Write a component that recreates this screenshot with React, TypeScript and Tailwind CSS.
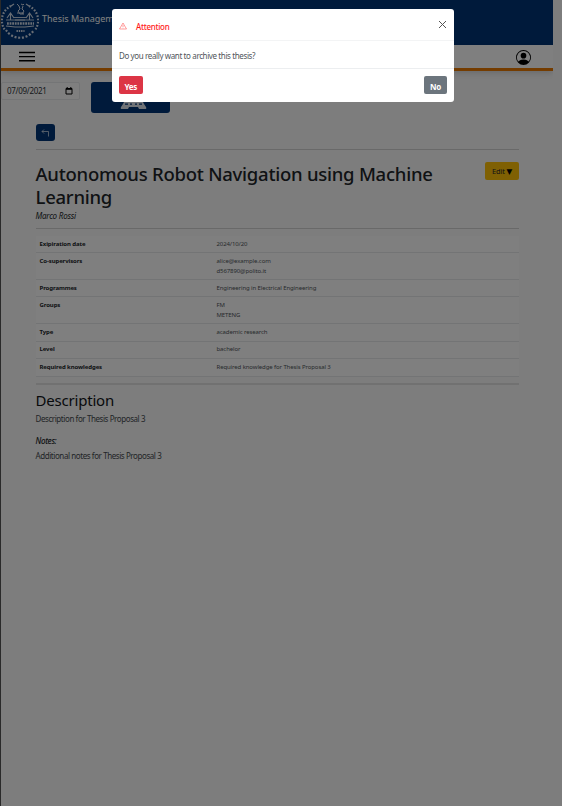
import React from "react";

const rows: { label: string; values: string[]; h: string }[] = [
  { label: "Exipiration date", values: ["2024/10/20"], h: "h-[17px] pt-[3px]" },
  { label: "Co-supervisors", values: ["alice@example.com", "d567890@polito.it"], h: "h-[27px] pt-[3px]" },
  { label: "Programmes", values: ["Engineering in Electrical Engineering"], h: "h-[17px] pt-[3px]" },
  { label: "Groups", values: ["FM", "METENG"], h: "h-[27px] pt-[3px]" },
  { label: "Type", values: ["academic research"], h: "h-[18px] pt-[3px]" },
  { label: "Level", values: ["bachelor"], h: "h-[17px] pt-[2px]" },
  { label: "Required knowledges", values: ["Required knowledge for Thesis Proposal 3"], h: "h-[18px] pt-[3px]" },
];

function Crest() {
  return (
    <svg width="38" height="40" viewBox="0 0 38 40" fill="none" stroke="#d3dbe8" className="shrink-0">
      <path d="M10 6A16 16 0 0 0 4 30M28 6A16 16 0 0 1 34 30" strokeWidth="2.2" strokeDasharray="1.6 1.6" />
      <path d="M13 4l-3 2M25 4l3 2" strokeWidth="1.2" />
      <path d="M5 30A16.500 16.500 0 0 0 33 30" strokeWidth="2.2" strokeDasharray="2 1.7" />
      <path d="M16 4l2 2 1 3-2 2 2 3h4M20 4l2 1 1-1M22 6l-1 3 2 2-2 3M16 13h7" strokeWidth="1" />
      <path d="M6 18l3.500-5 3.500 5M25 18l3.500-5 3.500 5M9.500 13v7M28.500 13v7" strokeWidth="1.1" />
      <path d="M13 17.500h12M14 20h10M5 20h28" strokeWidth="0.9" />
      <path d="M6 23.500h27" strokeWidth="2.4" strokeDasharray="1.8 0.8" />
      <path d="M5 26l9 1h10l9-1" strokeWidth="1.2" />
      <path d="M15.500 31h8" strokeWidth="2.2" strokeDasharray="1.4 0.9" />
    </svg>
  );
}

export default function App() {
  return (
    <div className="relative h-[806px] w-[562px] overflow-hidden bg-[#fafafa] font-['Noto_Sans','Open_Sans',sans-serif] text-[#212529]">
      <div className="flex h-full">
        <div className="w-px shrink-0 bg-[#555]" />
        <div className="w-[552px] shrink-0">
          <header className="flex h-[45px] items-start bg-[#003576] text-white">
            <Crest />
            <span className="ml-[3px] mt-[12px] whitespace-nowrap text-[9px] leading-[14px]">Thesis Management</span>
          </header>
          <nav className="flex h-[25.5px] items-start justify-between border-b-[3px] border-[#e87800] bg-white pl-[18px] pr-[22px] shadow-[0_2px_6px_rgba(0,0,0,0.15)]">
            <svg width="16" height="11" viewBox="0 0 16 11" className="mt-[6px]" stroke="#000" strokeWidth="1.4">
              <path d="M0 1.500h16M0 5.600h16M0 9.700h16" />
            </svg>
            <svg width="15" height="15" viewBox="0 0 16 16" className="mt-[5px]" fill="#000">
              <path d="M11 6a3 3 0 1 1-6 0 3 3 0 0 1 6 0" />
              <path fillRule="evenodd" d="M0 8a8 8 0 1 1 16 0A8 8 0 0 1 0 8m8-7a7 7 0 0 0-5.468 11.37C3.242 11.226 4.805 10 8 10s4.757 1.225 5.468 2.37A7 7 0 0 0 8 1" />
            </svg>
          </nav>
          <div className="flex h-[42.5px] items-start pt-[11.5px]">
            <div className="flex h-[18px] w-[79px] items-center justify-between rounded-[2px] border border-[#e8eaec] bg-white pl-[5px] pr-[6px] text-[8px] tracking-[-0.3px] text-[#30353a]">
              <span>07/09/2021</span>
              <svg width="8" height="8" viewBox="0 0 8 8" fill="none" stroke="#000">
                <path d="M1 1.500h6v5.500H1zM1 2.300h6M2.200 0v1.500M5.800 0v1.500" />
              </svg>
            </div>
            <div className="ml-[11px] flex h-[31px] w-[79px] items-end justify-center rounded-[3px] bg-[#003576] pb-[3px]">
              <svg width="27" height="20" viewBox="0 0 27 20" fill="#e0e6ef" className="ml-[5px]">
                <path d="M4 0h19v12l1 2 2 3q1 2-1 2h-6l-1-2h-9l-1 2H2q-2 0-1-2l2-3 1-2z" />
                <path d="M5 13.500h3v1.200H5zM10 13.500h2v1.200h-2zM15 13.500h2v1.200h-2zM19 13.500h3v1.200h-3z" fill="#003576" />
              </svg>
            </div>
          </div>
          <main className="ml-[34.5px] w-[483.5px] pt-[11px]">
            <div className="flex h-[17px] w-[19.5px] items-center justify-center rounded-[3px] bg-[#003576]">
              <svg width="9" height="9" viewBox="0 0 9 9" fill="none" stroke="#e6ebf3" strokeWidth="0.7">
                <path d="M3 1.500L1 3.500l2 2M1 3.500h6.500v5" />
              </svg>
            </div>
            <div className="mt-[8px] h-px bg-[#d2d2d2]" />
            <div className="flex h-[59px] items-start justify-between pt-[12px]">
              <h1 className="whitespace-nowrap text-[18.5px] font-medium leading-[23px] tracking-[-0.25px]">
                Autonomous Robot Navigation using Machine
                <br />
                Learning
              </h1>
              <button className="h-[18px] w-[34px] whitespace-nowrap rounded-[2px] bg-[#ffc107] text-[7.5px] leading-[18px] tracking-[-0.2px]">
                Edit <span className="font-['DejaVu_Sans'] text-black">▼</span>
              </button>
            </div>
            <p className="h-[19px] text-[8px] italic leading-[14px] tracking-[-0.2px]">Marco Rossi</p>
            <div className="h-px bg-[#d2d2d2]" />
            <div className="mt-[7px] text-[6px] leading-[10px]">
              {rows.map((r) => (
                <div key={r.label} className={`flex border-b border-[#e6e8ea] bg-white pl-[4px] ${r.h}`}>
                  <div className="w-[177px] font-bold tracking-[-0.1px]">{r.label}</div>
                  <div className="tracking-[-0.1px] text-[#50555a]">
                    {r.values.map((v) => (
                      <div key={v}>{v}</div>
                    ))}
                  </div>
                </div>
              ))}
            </div>
            <div className="mt-[6px] h-[2px] bg-[#e2e2e2]" />
            <h2 className="mt-[6px] text-[15px] leading-[18px] tracking-[-0.2px] text-[#101418]">Description</h2>
            <p className="mt-[4px] text-[8px] leading-[12px] tracking-[-0.42px] text-[#454a4f]">Description for Thesis Proposal 3</p>
            <p className="mt-[10px] text-[8px] font-medium italic leading-[12px] tracking-[-0.35px]">Notes:</p>
            <p className="mt-[3px] text-[8px] leading-[12px] tracking-[-0.42px] text-[#454a4f]">Additional notes for Thesis Proposal 3</p>
          </main>
        </div>
        <div className="w-[9px] shrink-0 bg-[#fafafa]" />
      </div>

      <div className="absolute inset-0 bg-black/50" />

      <div className="absolute left-[111.5px] top-[9px] flex h-[92.5px] w-[342.5px] flex-col rounded-[3px] bg-white">
        <div className="flex h-[32px] items-center border-b border-[#f3f4f5] pl-[7.5px] pr-[7px] text-[8px] tracking-[-0.3px] text-[#ff1a1a]">
          <svg width="8" height="8" viewBox="0 0 16 16" fill="none" stroke="#ff5a5a" strokeWidth="1.2" className="mt-[3px]">
            <path d="M8 2L15 14H1zM8 6v4M8 11.500v1" />
          </svg>
          <span className="ml-[9px] mt-[4px] font-medium">Attention</span>
          <svg width="9" height="9" viewBox="0 0 9 9" className="ml-auto" stroke="#555" fill="none">
            <path d="M1 1l7 7M8 1L1 8" />
          </svg>
        </div>
        <p className="h-[28px] border-b border-[#eceef0] pl-[7.5px] pt-[8px] text-[8px] leading-[13px] tracking-[-0.38px] text-[#50555a]">
          Do you really want to archive this thesis?
        </p>
        <div className="flex justify-between pl-[7.5px] pr-[7px] pt-[7px] text-[8px] font-bold tracking-[-0.3px] text-white">
          <button className="h-[18px] w-[23.5px] rounded-[2px] bg-[#dc3545] pt-[3px] leading-[15px]">Yes</button>
          <button className="h-[18px] w-[23px] rounded-[2px] bg-[#6c757d] pt-[3px] leading-[15px]">No</button>
        </div>
      </div>
    </div>
  );
}
